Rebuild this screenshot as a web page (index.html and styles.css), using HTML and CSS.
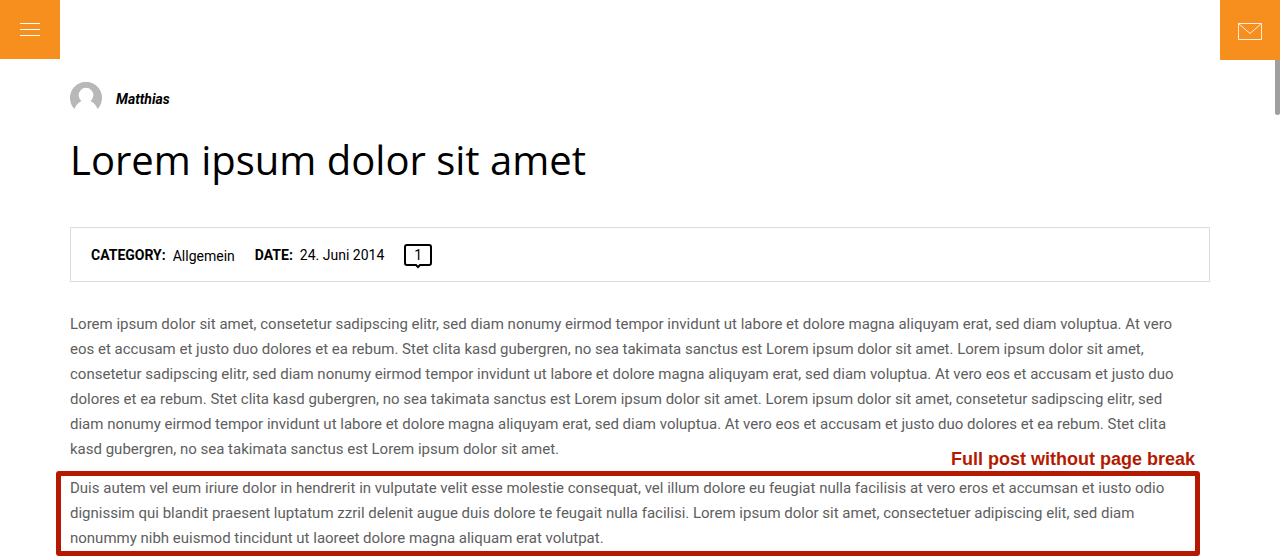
FILE: index.html
```html
<!DOCTYPE html>
<html lang="en">
<head>
<meta charset="utf-8">
<meta name="viewport" content="width=device-width, initial-scale=1">
<title>Lorem ipsum dolor sit amet</title>
<link rel="stylesheet" href="styles.css">
</head>
<body>
<header class="topbar">
  <button class="square square-menu" type="button" aria-label="Menu">
    <svg width="20" height="13" viewBox="0 0 20 13" aria-hidden="true"><path d="M0 .5h20M0 6.5h20M0 12.5h20" stroke="#fff" fill="none"/></svg>
  </button>
  <button class="square square-mail" type="button" aria-label="Contact">
    <svg width="24" height="17" viewBox="0 0 24 17" aria-hidden="true"><path d="M.5 .5h23v16H.5zM.5 .5L12 10.500L23.500 .5" stroke="#fff" stroke-opacity=".85" fill="none"/></svg>
  </button>
</header>
<div class="scroll-thumb"></div>
<main class="post">
  <div class="author">
    <svg class="avatar" width="32" height="32" viewBox="0 0 32 32" aria-hidden="true">
      <path d="M4.500 27A16 16 0 1 1 27.500 27C26.300 23.500 24 20.500 20.500 18.900A7.300 7.300 0 1 0 11.500 18.900C8 20.500 5.700 23.500 4.500 27z" fill="#b8b8b8"/>
    </svg>
    <span class="author-name">Matthias</span>
  </div>
  <h1 class="title">Lorem ipsum dolor sit amet</h1>
  <div class="meta">
    <div class="meta-item"><b>CATEGORY:</b><a class="category" href="#">Allgemein</a></div>
    <div class="meta-item"><b>DATE:</b><span>24. Juni 2014</span></div>
    <a class="comments" href="#" aria-label="1 comment">1<svg class="comments-tail" width="8" height="5" viewBox="0 0 8 5" aria-hidden="true"><path d="M1 0L4 3L7 0" fill="#fff" stroke="#000" stroke-width="2"/></svg></a>
  </div>
  <p class="text">Lorem ipsum dolor sit amet, consetetur sadipscing elitr, sed diam nonumy eirmod tempor invidunt ut labore et dolore magna aliquyam erat, sed diam voluptua. At vero eos et accusam et justo duo dolores et ea rebum. Stet clita kasd gubergren, no sea takimata sanctus est Lorem ipsum dolor sit amet. Lorem ipsum dolor sit amet, consetetur sadipscing elitr, sed diam nonumy eirmod tempor invidunt ut labore et dolore magna aliquyam erat, sed diam voluptua. At vero eos et accusam et justo duo dolores et ea rebum. Stet clita kasd gubergren, no sea takimata sanctus est Lorem ipsum dolor sit amet. Lorem ipsum dolor sit amet, consetetur sadipscing elitr, sed diam nonumy eirmod tempor invidunt ut labore et dolore magna aliquyam erat, sed diam voluptua. At vero eos et accusam et justo duo dolores et ea rebum. Stet clita kasd gubergren, no sea takimata sanctus est Lorem ipsum dolor sit amet.</p>
  <div class="highlight">
    <strong class="highlight-label">Full post without page break</strong>
    <p class="text">Duis autem vel eum iriure dolor in hendrerit in vulputate velit esse molestie consequat, vel illum dolore eu feugiat nulla facilisis at vero eros et accumsan et iusto odio dignissim qui blandit praesent luptatum zzril delenit augue duis dolore te feugait nulla facilisi. Lorem ipsum dolor sit amet, consectetuer adipiscing elit, sed diam nonummy nibh euismod tincidunt ut laoreet dolore magna aliquam erat volutpat.</p>
  </div>
</main>
</body>
</html>
```

FILE: styles.css
```css
* {
  box-sizing: border-box;
}

body {
  margin: 0;
  background: #fff;
  color: #000;
  font-family: Roboto, "Liberation Sans", sans-serif;
  font-size: 14px;
}

.topbar {
  display: flex;
  justify-content: space-between;
  align-items: flex-start;
  height: 60px;
}

.square {
  display: flex;
  align-items: center;
  justify-content: center;
  width: 60px;
  height: 60px;
  padding: 0;
  border: 0;
  background: #f78f1e;
}

.square-menu {
  height: 59px;
}

.square-mail {
  padding-top: 3px;
}

.scroll-thumb {
  position: absolute;
  top: 60px;
  right: 0;
  width: 5px;
  height: 55px;
  border-radius: 0 0 3px 3px;
  background: #9f9f9f;
}

.post {
  padding: 22px 70px 0;
}

.author {
  display: flex;
  align-items: center;
  gap: 14px;
}

.author-name {
  padding-top: 2px;
  font-weight: 700;
  font-style: italic;
}

.title {
  margin: 14px 0 36px;
  font-family: "Open Sans", "Noto Sans", sans-serif;
  font-size: 40px;
  font-weight: 400;
  line-height: 63px;
}

.meta {
  display: flex;
  align-items: center;
  gap: 20px;
  min-height: 55px;
  padding: 0 20px;
  border: 1px solid #dcdcdc;
}

.meta-item {
  display: flex;
  gap: 7px;
  height: 20px;
  line-height: 20px;
}

.category {
  padding-top: 1px;
  color: inherit;
  text-decoration: none;
}

.comments {
  position: relative;
  width: 28px;
  border: 2px solid #000;
  border-radius: 3px;
  color: #000;
  line-height: 18px;
  text-align: center;
  text-decoration: none;
}

.comments-tail {
  position: absolute;
  top: 18px;
  left: 8px;
}

.text {
  margin: 0;
  color: #5e5e5e;
  font-size: 15px;
  line-height: 25px;
}

.meta + .text {
  margin-top: 30px;
  padding-right: 20px;
}

.highlight {
  position: relative;
  margin: 9px 10px 0 -14px;
  padding: 0 9px;
  border: 5px solid #b51a00;
  border-radius: 3px;
}

.highlight-label {
  position: absolute;
  right: 0;
  bottom: 100%;
  margin-bottom: 7px;
  color: #b51a00;
  font-family: "Liberation Sans", Arial, sans-serif;
  font-size: 18px;
  line-height: 20px;
}
```
